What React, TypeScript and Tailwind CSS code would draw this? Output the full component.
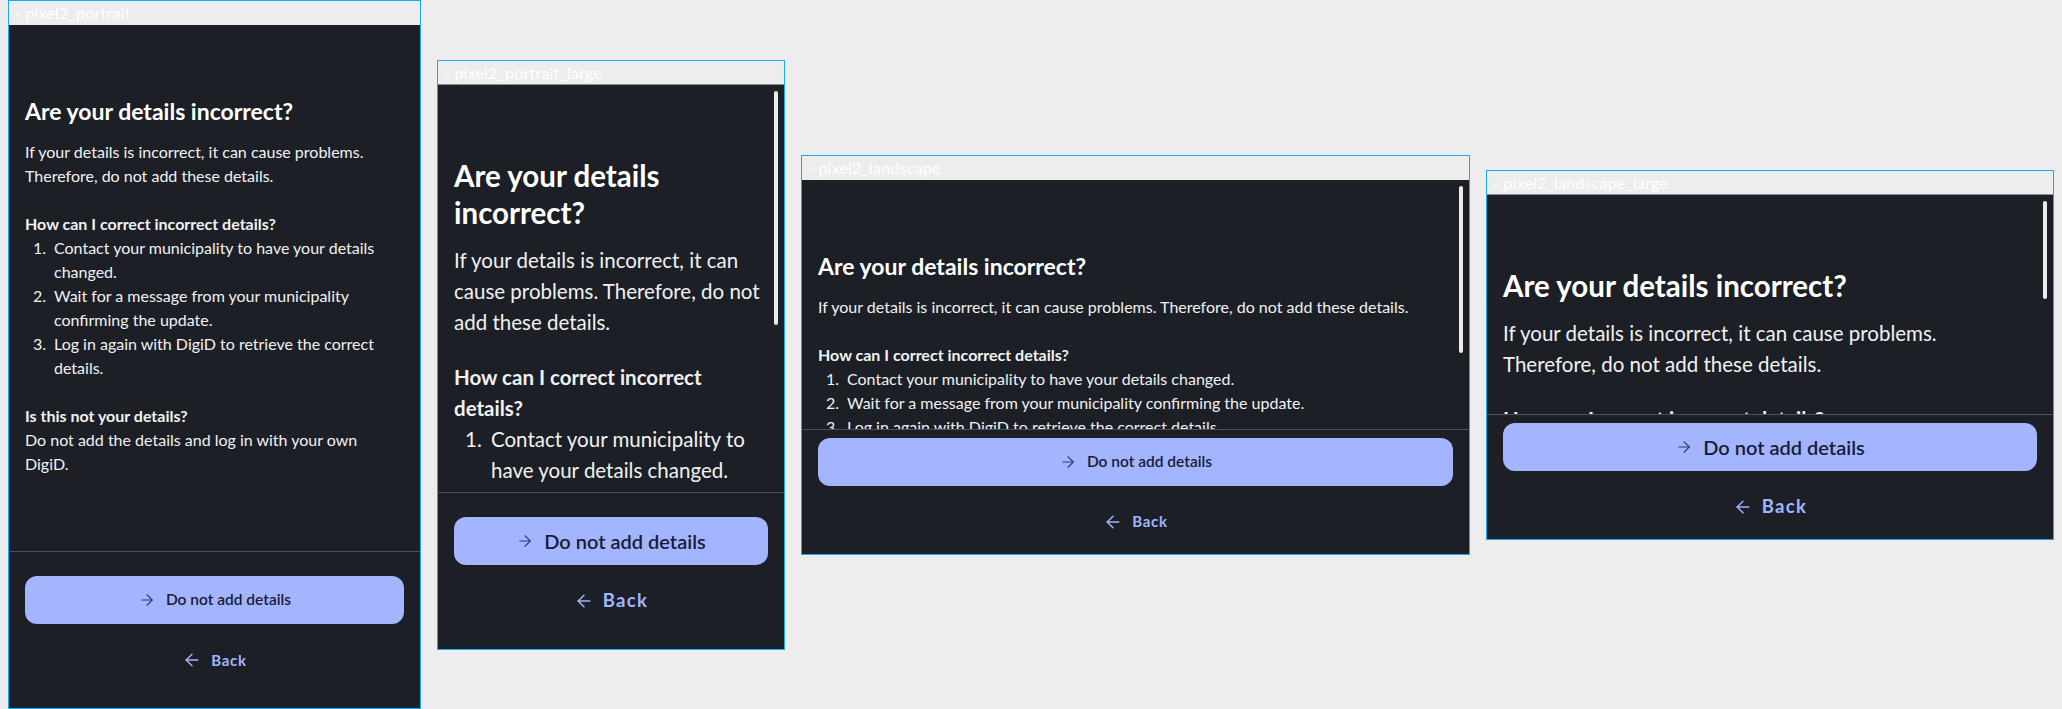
import React from 'react';
import { ArrowLeft, ArrowRight } from 'lucide-react';
import { clsx } from 'clsx';

type Size = 'normal' | 'large';

const styles = {
  normal: {
    h1: 'text-[23px] leading-[29px]',
    body: 'text-[16px] leading-[24px]',
    num: 'w-[29px] pl-2',
    btn: 'text-[15.5px]',
    back: 'text-[15px] tracking-[0.05em]',
  },
  large: {
    h1: 'text-[29.5px] leading-[37px]',
    body: 'text-[20.5px] leading-[31px]',
    num: 'w-[37px] pl-[11px]',
    btn: 'text-[20px]',
    back: 'text-[18.5px] tracking-[0.07em]',
  },
};

const steps = [
  'Contact your municipality to have your details changed.',
  'Wait for a message from your municipality confirming the update.',
  'Log in again with DigiD to retrieve the correct details.',
];

const Content = ({ size, wide }: { size: Size; wide?: boolean }) => {
  const s = styles[size];
  return (
    <div className={clsx('pl-4 pt-[72px] text-[#f1f1f3]', wide ? 'pr-8' : 'pr-4')}>
      <h1 className={clsx('font-bold text-white', s.h1)}>Are your details incorrect?</h1>
      <p className={clsx('mt-[14px]', s.body)}>
        If your details is incorrect, it can cause problems. Therefore, do not add these details.
      </p>
      <div className={clsx('mt-6', s.body)}>
        <p className="font-bold">How can I correct incorrect details?</p>
        <ol>
          {steps.map((text, i) => (
            <li key={i} className="flex">
              <span className={clsx('shrink-0', s.num)}>{i + 1}.</span>
              <span>{text}</span>
            </li>
          ))}
        </ol>
      </div>
      <div className={clsx('mt-6', s.body)}>
        <p className="font-bold">Is this not your details?</p>
        <p>Do not add the details and log in with your own DigiD.</p>
      </div>
    </div>
  );
};

const Footer = ({ size, landscape }: { size: Size; landscape?: boolean }) => {
  const s = styles[size];
  return (
    <div className={clsx('shrink-0 border-t border-[#4b505e] px-4', landscape ? 'py-2' : 'py-6')}>
      <button className="flex h-12 w-full items-center justify-center gap-[10px] rounded-xl bg-[#a3b5ff] font-semibold text-[#181b38]">
        <ArrowRight size={18} strokeWidth={1.5} className="text-[#353b6a]" />
        <span className={s.btn}>Do not add details</span>
      </button>
      <div className="mt-3 flex h-12 items-center justify-center gap-[9px] font-bold text-[#a3b5ff]">
        <ArrowLeft size={20} strokeWidth={1.75} />
        <span className={s.back}>Back</span>
      </div>
    </div>
  );
};

interface FrameProps {
  label: string;
  size: Size;
  landscape?: boolean;
  className: string;
  bar?: string;
}

const Frame = ({ label, size, landscape, className, bar }: FrameProps) => (
  <div className={clsx('flex shrink-0 flex-col border border-[#14adf2] bg-[#ededed]', className)}>
    <div
      className={clsx(
        'h-6 shrink-0 pl-[6px] text-[16px] leading-6 tracking-[0.2px] text-white',
        size === 'large' && 'border-b border-[#8d8f94] leading-[23px]'
      )}>
      - {label}
    </div>
    <div className="flex min-h-0 flex-1 flex-col bg-[#1c1f26]">
      <div className="relative min-h-0 flex-1 overflow-hidden">
        <Content size={size} wide={size === 'large' && landscape} />
        {bar && <div className={clsx('absolute right-[6px] top-[6px] w-1 rounded-full bg-[#ebebeb]', bar)} />}
      </div>
      <Footer size={size} landscape={landscape} />
    </div>
  </div>
);

export default function App() {
  return (
    <div className="flex h-[709px] w-[2062px] items-center gap-4 bg-[#ededed] pl-2 font-['Lato',sans-serif]">
      <Frame label="pixel2_portrait" size="normal" className="h-[709px] w-[413px]" />
      <Frame label="pixel2_portrait_large" size="large" className="h-[590px] w-[348px]" bar="h-[234px]" />
      <Frame label="pixel2_landscape" size="normal" landscape className="h-[400px] w-[669px]" bar="h-[167px]" />
      <Frame label="pixel2_landscape_large" size="large" landscape className="h-[370px] w-[568px]" bar="h-[98px]" />
    </div>
  );
}
